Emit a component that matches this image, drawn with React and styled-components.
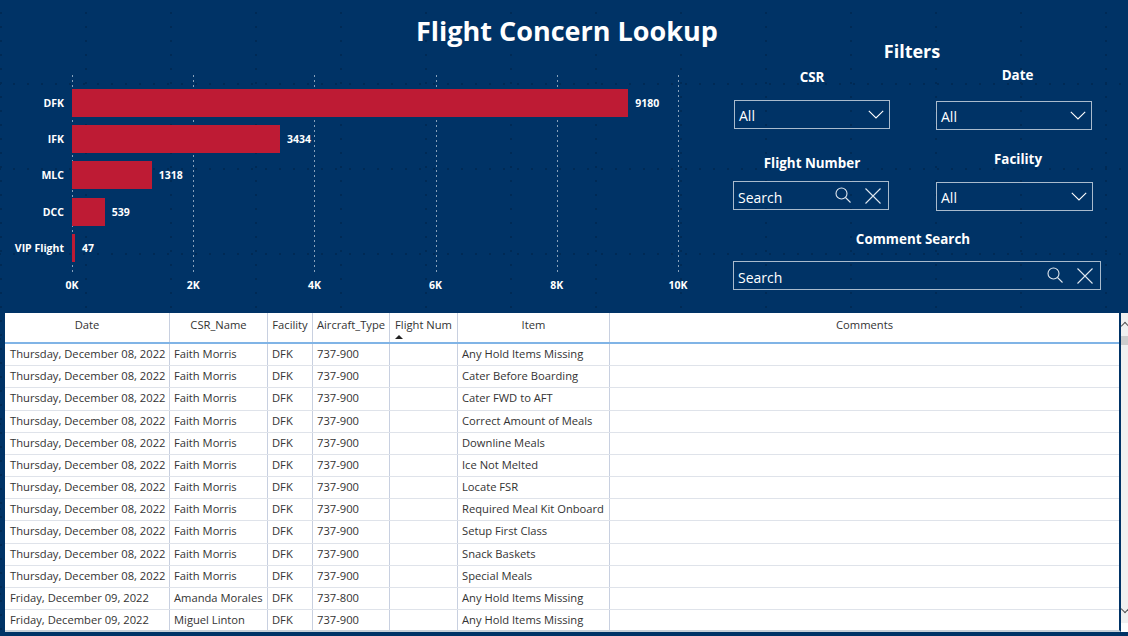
import styled, { createGlobalStyle } from "styled-components";

const GlobalStyle = createGlobalStyle`
    html, body{
        margin: 0;
        padding: 0;
        background-color: #003366;
    }
`

const FONT = `"Open Sans", "Noto Sans", "Liberation Sans", sans-serif`

const chartData = [
    {label: 'DFK', value: 9180},
    {label: 'IFK', value: 3434},
    {label: 'MLC', value: 1318},
    {label: 'DCC', value: 539},
    {label: 'VIP Flight', value: 47},
]
const ticks = ['0K', '2K', '4K', '6K', '8K', '10K']
const PX_PER_UNIT = 606 / 10000

const columns = [
    {name: 'Date', width: 165},
    {name: 'CSR_Name', width: 98},
    {name: 'Facility', width: 45},
    {name: 'Aircraft_Type', width: 77},
    {name: 'Flight Num', width: 68, sorted: true},
    {name: 'Item', width: 152},
    {name: 'Comments', width: 509},
]

const THU = 'Thursday, December 08, 2022'
const FRI = 'Friday, December 09, 2022'
const rows = [
    [THU, 'Faith Morris', '737-900', 'Any Hold Items Missing'],
    [THU, 'Faith Morris', '737-900', 'Cater Before Boarding'],
    [THU, 'Faith Morris', '737-900', 'Cater FWD to AFT'],
    [THU, 'Faith Morris', '737-900', 'Correct Amount of Meals'],
    [THU, 'Faith Morris', '737-900', 'Downline Meals'],
    [THU, 'Faith Morris', '737-900', 'Ice Not Melted'],
    [THU, 'Faith Morris', '737-900', 'Locate FSR'],
    [THU, 'Faith Morris', '737-900', 'Required Meal Kit Onboard'],
    [THU, 'Faith Morris', '737-900', 'Setup First Class'],
    [THU, 'Faith Morris', '737-900', 'Snack Baskets'],
    [THU, 'Faith Morris', '737-900', 'Special Meals'],
    [FRI, 'Amanda Morales', '737-800', 'Any Hold Items Missing'],
    [FRI, 'Miguel Linton', '737-900', 'Any Hold Items Missing'],
]

const Chevron = () => (
    <svg width="16" height="9" viewBox="0 0 16 9" fill="none" stroke="#fff" strokeWidth="1.1">
        <path d="M0.8 0.8 L8 8 L15.2 0.8"/>
    </svg>
)

const SearchGlyph = () => (
    <svg width="16" height="17" viewBox="0 0 16 17" fill="none" stroke="#dfe7ef" strokeWidth="1.1">
        <circle cx="6.5" cy="6.5" r="5.5"/>
        <path d="M10.5 10.5 L15.5 15.5"/>
    </svg>
)

const CloseGlyph = () => (
    <svg width="16" height="16" viewBox="0 0 16 16" fill="none" stroke="#dfe7ef" strokeWidth="1.1">
        <path d="M0.5 0.5 L15.5 15.5 M15.5 0.5 L0.5 15.5"/>
    </svg>
)

const Dropdown = () => (
    <Field>
        <FieldText>All</FieldText>
        <ChevronSlot><Chevron /></ChevronSlot>
    </Field>
)

const SearchBox = () => (
    <Field>
        <FieldText $low>Search</FieldText>
        <IconSlot><SearchGlyph /><CloseGlyph /></IconSlot>
    </Field>
)

const App = () => {
    return (
        <Page>
            <GlobalStyle />
            <Top>
                <LeftPane>
                    <Title>Flight Concern Lookup</Title>
                    <Chart>
                        <Plot>
                            {ticks.map((tick, index) => <GridLine key={tick} $index={index}/>)}
                            {chartData.map(item =>
                                <BarRow key={item.label}>
                                    <BarLabel>{item.label}</BarLabel>
                                    <Bar style={{width: Math.max(item.value * PX_PER_UNIT, 3)}}/>
                                    <BarValue>{item.value}</BarValue>
                                </BarRow>
                            )}
                        </Plot>
                        <Axis>
                            {ticks.map(tick => <Tick key={tick}>{tick}</Tick>)}
                        </Axis>
                    </Chart>
                </LeftPane>
                <Filters>
                    <FiltersTitle>Filters</FiltersTitle>
                    <FilterGrid>
                        <Filter $top={1} $gap={11} $shift={1}>
                            <FilterLabel>CSR</FilterLabel>
                            <Dropdown />
                        </Filter>
                        <Filter $top={-1} $gap={14}>
                            <FilterLabel $offset={7}>Date</FilterLabel>
                            <Dropdown />
                        </Filter>
                        <Filter $top={6} $gap={6}>
                            <FilterLabel $offset={2}>Flight Number</FilterLabel>
                            <SearchBox />
                        </Filter>
                        <Filter $top={2} $gap={11} $grow={1}>
                            <FilterLabel $offset={7}>Facility</FilterLabel>
                            <Dropdown />
                        </Filter>
                    </FilterGrid>
                    <WideFilter $gap={10}>
                        <FilterLabel $offset={-8}>Comment Search</FilterLabel>
                        <SearchBox />
                    </WideFilter>
                </Filters>
            </Top>
            <TableFrame>
                <Table>
                    <HeaderRow>
                        {columns.map(col =>
                            <HeaderCell key={col.name} style={{width: col.width}}>
                                {col.name}
                                {col.sorted && <SortMark />}
                            </HeaderCell>
                        )}
                    </HeaderRow>
                    {rows.map((row, index) => {
                        const cells = [row[0], row[1], 'DFK', row[2], '', row[3], '']
                        return (
                            <DataRow key={index}>
                                {cells.map((text, i) =>
                                    <DataCell key={i} style={{width: columns[i].width}}>{text}</DataCell>
                                )}
                            </DataRow>
                        )
                    })}
                </Table>
                <Scrollbar>
                    <ScrollArrow $up/>
                    <ScrollThumb />
                    <ScrollArrow />
                </Scrollbar>
            </TableFrame>
        </Page>
    )
}

export default App;

const Page = styled.div`
    width: 1128px;
    height: 636px;
    overflow: hidden;
    background-color: #003366;
    background-image:
        radial-gradient(circle at 1px 1px, #002a55 1px, transparent 1px),
        radial-gradient(circle at 1px 1px, #002a55 1px, transparent 1px);
    background-size: 85px 14px, 14px 85px;
    background-position: 0 12px, 13px 83px;
    font-family: ${FONT};
    display: flex;
    flex-direction: column;
`

const Top = styled.div`
    height: 313px;
    display: flex;
    flex-shrink: 0;
`

const LeftPane = styled.div`
    width: 733px;
    display: flex;
    flex-direction: column;
`

const Title = styled.h1`
    margin: 13px 0 1px 0;
    padding-left: 416px;
    height: 35px;
    white-space: nowrap;
    font-size: 27px;
    line-height: 35px;
    font-weight: 700;
    color: #fff;
`

const Chart = styled.div`
    margin-top: 26px;
    display: flex;
    flex-direction: column;
`

const Plot = styled.div`
    position: relative;
    height: 197px;
    margin-left: 72px;
    padding-top: 14px;
    box-sizing: border-box;
    display: flex;
    flex-direction: column;
    gap: 8.2px;
`

const GridLine = styled.span`
    position: absolute;
    top: 0;
    bottom: 0;
    width: 1px;
    left: ${p => p.$index * 121.2}px;
    background-image: linear-gradient(#86a0ba 40%, transparent 40%);
    background-size: 1px 5px;
`

const BarRow = styled.div`
    position: relative;
    height: 28px;
    display: flex;
    align-items: center;
`

const BarLabel = styled.span`
    position: absolute;
    right: calc(100% + 8px);
    white-space: nowrap;
    font-size: 10.5px;
    font-weight: 700;
    color: #fff;
`

const Bar = styled.div`
    height: 28px;
    background-color: #BE1B34;
    flex-shrink: 0;
    z-index: 1;
`

const BarValue = styled.span`
    margin-left: 7px;
    font-size: 10.5px;
    font-weight: 700;
    color: #fff;
    z-index: 1;
`

const Axis = styled.div`
    margin-left: 72px;
    margin-top: 5px;
    width: 606px;
    height: 16px;
    display: flex;
    justify-content: space-between;
`

const Tick = styled.span`
    width: 0;
    display: flex;
    justify-content: center;
    white-space: nowrap;
    font-size: 10.5px;
    line-height: 16px;
    font-weight: 700;
    color: #fff;
`

const Filters = styled.div`
    width: 395px;
    padding-top: 39px;
    display: flex;
    flex-direction: column;
    box-sizing: border-box;
`

const FiltersTitle = styled.h2`
    margin: 0 0 1px 0;
    width: 358px;
    text-align: center;
    font-size: 18px;
    line-height: 24px;
    font-weight: 700;
    color: #fff;
`

const FilterGrid = styled.div`
    display: grid;
    grid-template-columns: 156px 156px;
    column-gap: 47px;
    row-gap: 15px;
`

const Filter = styled.div`
    display: flex;
    flex-direction: column;
    gap: ${p => p.$gap}px;
    margin-top: ${p => p.$top || 0}px;
    margin-left: ${p => p.$shift || 0}px;
    margin-right: ${p => -(p.$shift || 0) - (p.$grow || 0)}px;
`

const WideFilter = styled(Filter)`
    width: 368px;
    margin-top: 16px;
`

const FilterLabel = styled.div`
    text-align: center;
    font-size: 13.4px;
    line-height: 24px;
    font-weight: 700;
    color: #fff;
    padding-left: ${p => Math.max(p.$offset || 0, 0)}px;
    padding-right: ${p => Math.max(-(p.$offset || 0), 0)}px;
`

const Field = styled.div`
    height: 29px;
    box-sizing: border-box;
    border: 1px solid #a9bbcd;
    display: flex;
    align-items: center;
    justify-content: space-between;
    padding: 0 5px 0 4px;
    color: #fff;
`

const FieldText = styled.span`
    font-size: 14px;
    padding-top: ${p => p.$low ? 3 : 2}px;
    color: #fff;
`

const ChevronSlot = styled.span`
    display: flex;
    padding-right: 0;
`

const IconSlot = styled.span`
    display: flex;
    align-items: center;
    gap: 14px;
    padding-right: 2px;
`

const TableFrame = styled.div`
    margin-left: 5px;
    width: 1123px;
    height: 319px;
    display: flex;
    background-color: #fff;
    overflow: hidden;
    flex-shrink: 0;
`

const Table = styled.div`
    width: 1114px;
    flex-shrink: 0;
    border-right: 2px solid #003366;
    background-color: #fff;
    border-bottom: 2px solid #c8d0d8;
    height: 317px;
    overflow: hidden;
`

const HeaderRow = styled.div`
    display: flex;
    height: 31px;
    box-sizing: border-box;
    border-bottom: 2px solid #80b4e6;
`

const HeaderCell = styled.div`
    position: relative;
    box-sizing: border-box;
    flex-shrink: 0;
    text-align: center;
    padding-top: 4px;
    font-size: 11.2px;
    line-height: 16px;
    color: #333;
    border-right: 1px solid #c8d0e0;
    white-space: nowrap;
    &:last-child{ border-right: 0; }
`

const SortMark = styled.span`
    position: absolute;
    left: 5px;
    top: 22px;
    width: 0;
    height: 0;
    border-left: 4px solid transparent;
    border-right: 4px solid transparent;
    border-bottom: 4px solid #222;
`

const DataRow = styled.div`
    display: flex;
    height: 22.18px;
    box-sizing: border-box;
    border-bottom: 1px solid #dfe3ea;
`

const DataCell = styled.div`
    box-sizing: border-box;
    flex-shrink: 0;
    padding-left: 4px;
    font-size: 11.2px;
    line-height: 20px;
    color: #333;
    border-right: 1px solid #c8d0e0;
    white-space: nowrap;
    overflow: hidden;
    &:first-child{ padding-left: 5px; }
    &:last-child{ border-right: 0; }
`

const Scrollbar = styled.div`
    flex: 1;
    height: 310px;
    display: flex;
    flex-direction: column;
    background-color: #f0f0f0;
    align-items: center;
`

const ScrollArrow = styled.span`
    width: 5px;
    height: 5px;
    margin: ${p => p.$up ? '10px 0 5px' : 'auto 0 11px'};
    border-left: 1px solid #555;
    border-top: 1px solid #555;
    transform: rotate(${p => p.$up ? '45deg' : '225deg'});
    flex-shrink: 0;
`

const ScrollThumb = styled.div`
    width: 100%;
    height: 9px;
    margin-top: 2px;
    background-color: #cdcdcd;
`
